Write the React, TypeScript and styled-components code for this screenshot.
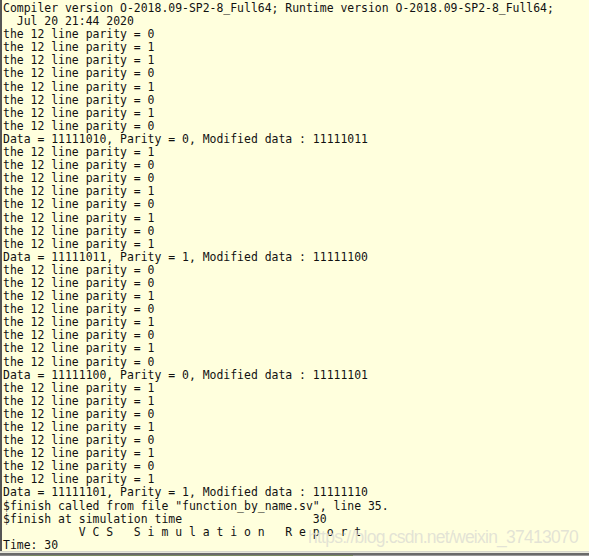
import React from "react";
import styled, { createGlobalStyle } from "styled-components";

const Global = createGlobalStyle`
  html, body { margin: 0; padding: 0; background: #ffffdd; }
  body { width: 589px; height: 556px; overflow: hidden; }
`;

const Screen = styled.div`
  position: relative;
  width: 589px;
  height: 556px;
  display: flex;
  flex-direction: column;
  background: #ffffdd;
  overflow: hidden;
`;

const Terminal = styled.div`
  height: 551px;
  flex: none;
  box-sizing: border-box;
  border-left: 2px solid #555;
  padding: 2px 0 0 1px;
  background: #ffffdd;
  overflow: hidden;
`;

const Line = styled.div`
  font-family: "DejaVu Sans Mono", monospace;
  font-size: 11.45px;
  line-height: 13.1px;
  height: 13.1px;
  color: #111;
  white-space: pre;
`;

const BottomEdge = styled.div`
  height: 1px;
  border-top: 1px solid #d8d8cc;
  border-bottom: 2px solid #6a6a6a;
  background: #e8e8dc;
  flex: none;
`;

const Strip = styled.div`
  height: 1px;
  background: linear-gradient(90deg, #888 0 20px, #7a8a60 20px 60%, #999 60%);
  flex: none;
`;

const Watermark = styled.div`
  position: absolute;
  left: 308px;
  top: 527px;
  font-family: "Liberation Sans", Arial, sans-serif;
  font-size: 17.5px;
  letter-spacing: -0.75px;
  color: rgba(222, 222, 212, 0.85);
  white-space: nowrap;
`;

const parity = (vals: number[]) => vals.map((v) => `the 12 line parity = ${v}`);

const lines: string[] = [
  "Compiler version O-2018.09-SP2-8_Full64; Runtime version O-2018.09-SP2-8_Full64;",
  "  Jul 20 21:44 2020",
  ...parity([0, 1, 1, 0, 1, 0, 1, 0]),
  "Data = 11111010, Parity = 0, Modified data : 11111011",
  ...parity([1, 0, 0, 1, 0, 1, 0, 1]),
  "Data = 11111011, Parity = 1, Modified data : 11111100",
  ...parity([0, 0, 1, 0, 1, 0, 1, 0]),
  "Data = 11111100, Parity = 0, Modified data : 11111101",
  ...parity([1, 1, 0, 1, 0, 1, 0, 1]),
  "Data = 11111101, Parity = 1, Modified data : 11111110",
  '$finish called from file "function_by_name.sv", line 35.',
  "$finish at simulation time                   30",
  "           V C S   S i m u l a t i o n   R e p o r t",
  "Time: 30",
];

export default function App() {
  return (
    <Screen>
      <Global />
      <Terminal>
        {lines.map((l, i) => (
          <Line key={i}>{l}</Line>
        ))}
      </Terminal>
      <BottomEdge />
      <Strip />
      <Watermark>https://blog.csdn.net/weixin_37413070</Watermark>
    </Screen>
  );
}
